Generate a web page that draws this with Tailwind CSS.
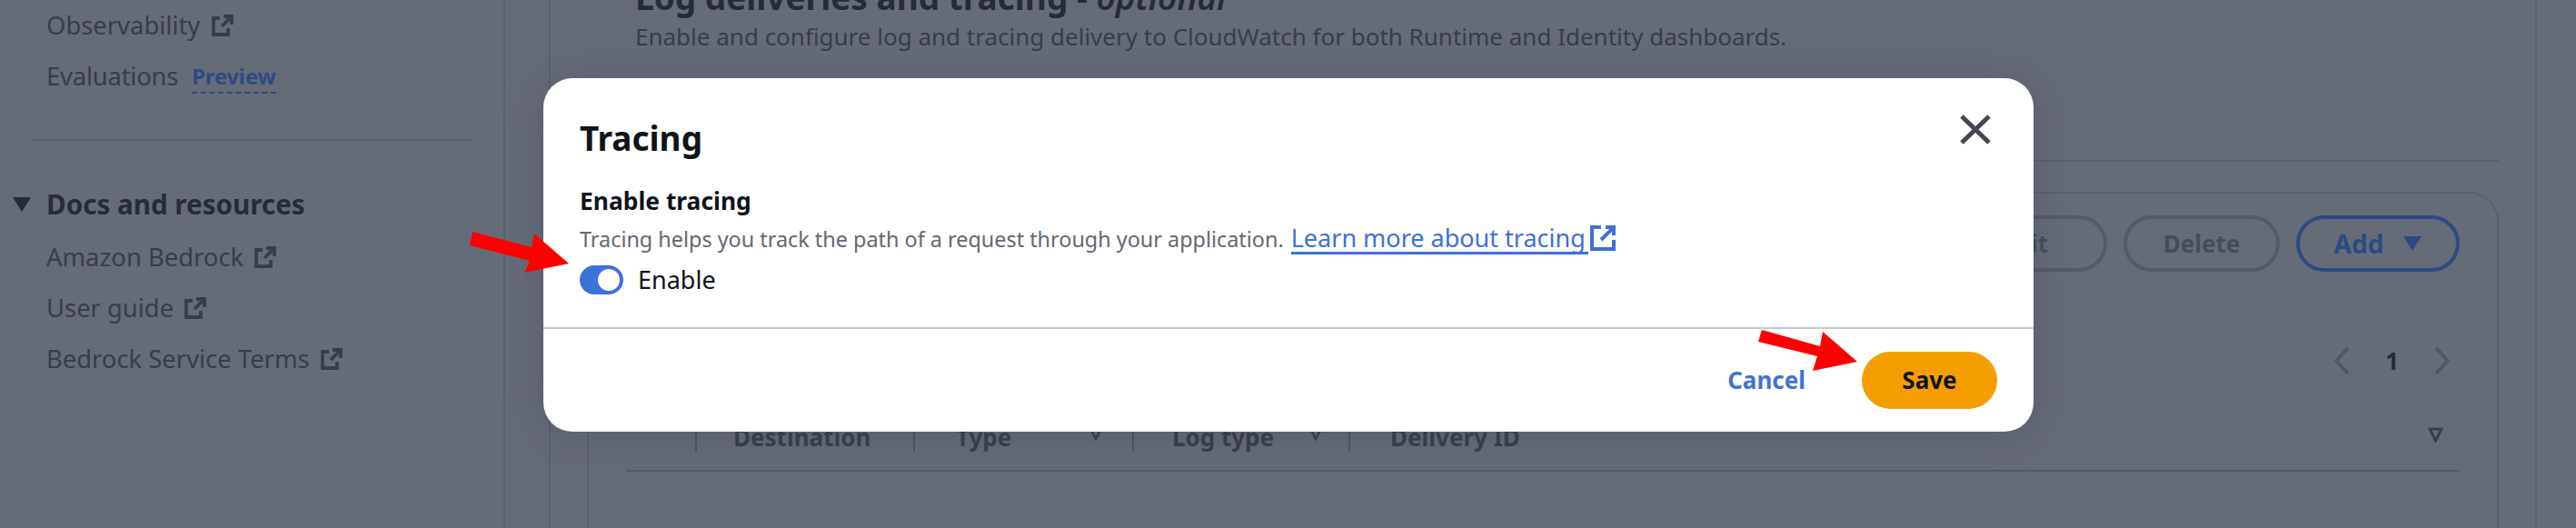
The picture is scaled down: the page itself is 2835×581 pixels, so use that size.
<!DOCTYPE html>
<html lang="en">
<head>
  <meta charset="UTF-8" />
  <title>Tracing</title>
  <script src="https://cdn.jsdelivr.net/npm/@tailwindcss/browser@4"></script>
</head>
<body class="bg-[#666b78] font-['Noto_Sans',sans-serif] text-[#2f3644]">
  <div class="relative w-[2835px] h-[581px] overflow-hidden flex">
    <!-- sidebar -->
    <aside class="w-[556px] h-full shrink-0 border-r-2 border-[#5a6070] pl-[51px] pr-[33px] text-[27.4px] text-[#363d4c]">
      <div class="flex items-center gap-[13px] h-[56px]">Observability
        <svg class="w-6 h-6" viewBox="0 0 24 24" fill="none" stroke="#363d4c" stroke-width="3.8"><path d="M9 4H2v18h16v-7M11 13 22 2M13 2h9v9"/></svg>
      </div>
      <div class="flex items-center gap-[15px] h-[56px]"><span class="tracking-[-0.2px]">Evaluations</span>
        <span class="text-[23.5px] font-bold text-[#2c4a85] border-b-2 border-dashed border-[#2c4a85] leading-[33px] mt-[3px]">Preview</span>
      </div>
      <div class="-ml-[17px] mt-[41px] border-t-2 border-[#5a6070]"></div>
      <div class="-ml-[37px] mt-[45px] flex items-center gap-[17px] h-[50px] text-[29.6px] font-bold text-[#252b38]">
        <svg class="w-5 h-4" viewBox="0 0 20 16" fill="#252b38"><path d="M0 0h20L10 16z"/></svg>
        Docs and resources
      </div>
      <div class="flex items-center gap-[12px] h-[56px] mt-[5px]">Amazon Bedrock
        <svg class="w-6 h-6" viewBox="0 0 24 24" fill="none" stroke="#363d4c" stroke-width="3.8"><path d="M9 4H2v18h16v-7M11 13 22 2M13 2h9v9"/></svg>
      </div>
      <div class="flex items-center gap-[12px] h-[56px]">User guide
        <svg class="w-6 h-6" viewBox="0 0 24 24" fill="none" stroke="#363d4c" stroke-width="3.8"><path d="M9 4H2v18h16v-7M11 13 22 2M13 2h9v9"/></svg>
      </div>
      <div class="flex items-center gap-[12px] h-[56px]">Bedrock Service Terms
        <svg class="w-6 h-6" viewBox="0 0 24 24" fill="none" stroke="#363d4c" stroke-width="3.8"><path d="M9 4H2v18h16v-7M11 13 22 2M13 2h9v9"/></svg>
      </div>
    </aside>

    <!-- main content behind the dialog -->
    <main class="ml-[48px] w-[2188px] h-full shrink-0 border-x-2 border-[#5a6070] px-[40px]">
      <div class="h-[178px] flex flex-col border-b-2 border-[#5a6070] pl-[53px]">
        <div class="-mt-[25px] h-[44px] text-[37px] font-bold whitespace-nowrap text-[#252b38] leading-[44px]">Log deliveries and tracing - <span class="italic font-semibold">optional</span></div>
        <div class="mt-[3px] text-[26px] leading-[36px] text-[#363d4c] whitespace-nowrap">Enable and configure log and tracing delivery to CloudWatch for both Runtime and Identity dashboards.</div>
      </div>
      <section class="mt-[33px] h-[400px] border-x-2 border-t-2 border-[#5a6070] rounded-t-[32px] pt-[24px] pl-[41px] pr-[41px]">
        <div class="flex justify-end gap-[18px]">
          <button class="w-[180px] h-[62px] rounded-full border-4 border-[#545a69] text-[26px] font-bold text-[#454c5c] text-center">Edit</button>
          <button class="w-[172px] h-[62px] rounded-full border-4 border-[#545a69] text-[26px] font-bold text-[#454c5c]">Delete</button>
          <button class="w-[180px] h-[62px] rounded-full border-4 border-[#2c4a85] text-[28px] font-bold text-[#2c4a85] flex items-center justify-center gap-[22px]">Add
            <svg class="w-5 h-4" viewBox="0 0 20 16" fill="#2c4a85"><path d="M0 0h20L10 16z"/></svg>
          </button>
        </div>
        <div class="mt-[78px] flex justify-end items-center pr-[10px] h-[40px] gap-[39px]">
          <svg class="w-[18px] h-[32px]" viewBox="0 0 18 32" fill="none" stroke="#4f5564" stroke-width="3.5"><path d="M16 2 3 16l13 14"/></svg>
          <span class="text-[26px] font-bold text-[#252b38]">1</span>
          <svg class="w-[18px] h-[32px]" viewBox="0 0 18 32" fill="none" stroke="#4f5564" stroke-width="3.5"><path d="M2 2l13 14L2 30"/></svg>
        </div>
        <div class="mt-[50px] h-[52px] border-b-2 border-[#535968] text-[26px] font-bold text-[#363d4c] flex items-start">
          <div class="w-[76px]"></div>
          <div class="w-[240px] h-[30px] border-l-2 border-[#4d5362] pl-[40px] leading-[28px] whitespace-nowrap">Destination</div>
          <div class="w-[241px] h-[30px] border-l-2 border-[#4d5362] pl-[45px] leading-[28px] flex justify-between pr-[32px]">Type
            <svg class="w-4 h-4 mt-[2px]" viewBox="0 0 16 16" fill="none" stroke="#363d4c" stroke-width="2.6"><path d="M2 2h12L8 14z"/></svg>
          </div>
          <div class="w-[238px] h-[30px] border-l-2 border-[#4d5362] pl-[42px] leading-[28px] flex justify-between pr-[28px]">Log type
            <svg class="w-4 h-4 mt-[2px]" viewBox="0 0 16 16" fill="none" stroke="#363d4c" stroke-width="2.6"><path d="M2 2h12L8 14z"/></svg>
          </div>
          <div class="flex-1 h-[30px] border-l-2 border-[#4d5362] pl-[44px] leading-[28px] flex justify-between pr-[18px]">Delivery ID
            <svg class="w-[17px] h-[17px] mt-[3px]" viewBox="0 0 16 16" fill="none" stroke="#363d4c" stroke-width="2.8"><path d="M2 2h12L8 14z"/></svg>
          </div>
        </div>
      </section>
    </main>

    <!-- dialog -->
    <div class="absolute left-[598px] top-[86px] w-[1640px] h-[389px] bg-white rounded-[32px] shadow-[0_4px_40px_rgba(60,65,80,0.35)] flex flex-col text-[#0f141a]">
      <div class="h-[276px] border-b-2 border-[#c6c6cd] px-[40px] relative">
        <h2 class="pt-[43px] text-[37px] leading-[46px] font-bold">Tracing</h2>
        <h3 class="mt-[28px] text-[26.4px] leading-[36px] font-bold">Enable tracing</h3>
        <p class="mt-[8px] text-[23.4px] leading-[33px] text-[#656871] flex items-center whitespace-nowrap">Tracing helps you track the path of a request through your application.
          <span class="ml-[8px] text-[#3c71d8] border-b-[3px] border-[#3c71d8] text-[27px] leading-[30px] pr-[3px]">Learn more about tracing</span>
          <svg class="ml-[1px] w-[30px] h-[30px] -mt-[4px]" viewBox="0 0 30 30" fill="none" stroke="#3c71d8" stroke-width="4"><path d="M13 3H3v24h24V17M13 17 27 3M18 3h9v9"/></svg>
        </p>
        <div class="mt-[12px] flex items-center gap-[16px] text-[27px] leading-[32px]">
          <div class="w-[48px] h-[32px] rounded-full bg-[#3c71d8] flex justify-end items-center pr-[4px]">
            <div class="w-[24px] h-[24px] rounded-full bg-white"></div>
          </div>
          Enable
        </div>
        <svg class="absolute right-[47px] top-[40px] w-[34px] h-[33px]" viewBox="0 0 34 33" fill="none" stroke="#424650" stroke-width="5"><path d="M2 2l30 29M32 2 2 31"/></svg>
      </div>
      <div class="flex-1 flex items-center justify-end pr-[40px] gap-[62px]">
        <span class="text-[26px] font-bold text-[#3f74d6]">Cancel</span>
        <button class="w-[149px] h-[63px] rounded-full bg-[#f59e00] text-[26px] font-bold">Save</button>
      </div>
    </div>

    <!-- annotation arrows -->
    <svg class="absolute left-0 top-0 w-[2835px] h-[581px] pointer-events-none" viewBox="0 0 2835 581" fill="#ff0000">
      <path d="M520 255 585 272 588 257 626 290 577 300 583 287 517 270z"/>
      <path d="M1939 363 2003 381 2006 365 2044 398 1995 408 2000 392 1935 376z"/>
    </svg>
  </div>
</body>
</html>
